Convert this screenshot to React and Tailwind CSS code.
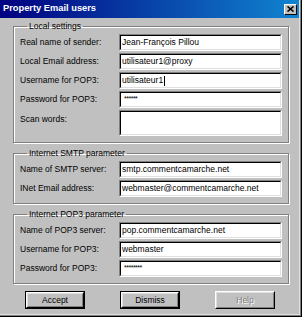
import React from "react";

function Sunken({ className = "", children }) {
  return (
    <div className={"border border-t-[#808080] border-l-[#808080] border-b-white border-r-white " + className}>
      <div className="h-full border border-t-black border-l-black border-b-[#dfdfdf] border-r-[#dfdfdf] bg-white flex items-center pl-[1px] text-black whitespace-nowrap overflow-hidden">
        {children}
      </div>
    </div>
  );
}

function Row({ label, children, tall }) {
  return (
    <div className={"flex " + (tall ? "h-[26px] items-start" : "h-[17px] items-center")}>
      <span className={"w-[99px] shrink-0 " + (tall ? "pt-[3px]" : "")}>{label}</span>
      <Sunken className="flex-1 h-full">{children}</Sunken>
    </div>
  );
}

function Group({ title, children }) {
  return (
    <fieldset className="border border-[#808080] shadow-[inset_1px_1px_0_#fff,1px_1px_0_#fff] px-[6px] pb-[6px] pt-[3px] flex flex-col gap-[2px]">
      <legend className="ml-[7px] px-[2px] leading-[10px]">{title}</legend>
      {children}
    </fieldset>
  );
}

function Button({ children, def, disabled }) {
  return (
    <div className={"w-[60px] h-[18px] " + (def ? "border border-black" : "")}>
      <div className="h-full border border-t-white border-l-white border-b-black border-r-black">
        <div className={"h-full border border-t-[#dfdfdf] border-l-[#dfdfdf] border-b-[#808080] border-r-[#808080] flex items-center justify-center " + (disabled ? "text-[#808080] [text-shadow:1px_1px_0_#fff]" : "text-black")}>
          {children}
        </div>
      </div>
    </div>
  );
}

export default function App() {
  return (
    <div className="w-[302px] h-[317px] bg-[#c0c0c0] flex flex-col font-['Liberation_Sans',Arial,sans-serif] text-[8.5px] text-black shadow-[inset_-1px_-1px_0_#000,inset_-2px_-2px_0_#808080,inset_-3px_-3px_0_#dfdfdf] overflow-hidden">
      <div className="h-[18px] mr-[3px] bg-[linear-gradient(90deg,#000080,#1084d0)] flex items-center justify-between pl-[3px] pr-[2px]">
        <span className="text-white font-bold text-[9.3px]">Property Email users</span>
        <div className="w-[13px] h-[11px] bg-[#c0c0c0] border border-t-white border-l-white border-b-black border-r-black flex items-center justify-center">
          <svg width="7" height="6" viewBox="0 0 7 6">
            <path d="M0.5 0.5 L6.5 5.5 M6.5 0.5 L0.5 5.5" stroke="#000" strokeWidth="1.6" />
          </svg>
        </div>
      </div>
      <div className="flex flex-col gap-[5px] pl-[13px] pr-[13px] pt-[3px]">
        <Group title="Local settings">
          <Row label="Real name of sender:">Jean-François Pillou</Row>
          <Row label="Local Email address:">utilisateur1@proxy</Row>
          <Row label="Username for POP3:">
            utilisateur1<span className="inline-block w-[1px] h-[10px] bg-black ml-[1px]" />
          </Row>
          <Row label="Password for POP3:">
            <span className="text-[7px] tracking-[-0.5px] pl-[2px]">******</span>
          </Row>
          <Row label="Scan words:" tall></Row>
        </Group>
        <Group title="Internet SMTP parameter">
          <Row label="Name of SMTP server:">smtp.commentcamarche.net</Row>
          <Row label="INet Email address:">webmaster@commentcamarche.net</Row>
        </Group>
        <Group title="Internet POP3 parameter">
          <Row label="Name of POP3 server:">pop.commentcamarche.net</Row>
          <Row label="Username for POP3:">webmaster</Row>
          <Row label="Password for POP3:">
            <span className="text-[7px] tracking-[-0.5px] pl-[2px]">********</span>
          </Row>
        </Group>
      </div>
      <div className="flex pl-[25px] gap-[35px] mt-[7px]">
        <Button def>Accept</Button>
        <Button def>Dismiss</Button>
        <Button disabled>Help</Button>
      </div>
    </div>
  );
}
